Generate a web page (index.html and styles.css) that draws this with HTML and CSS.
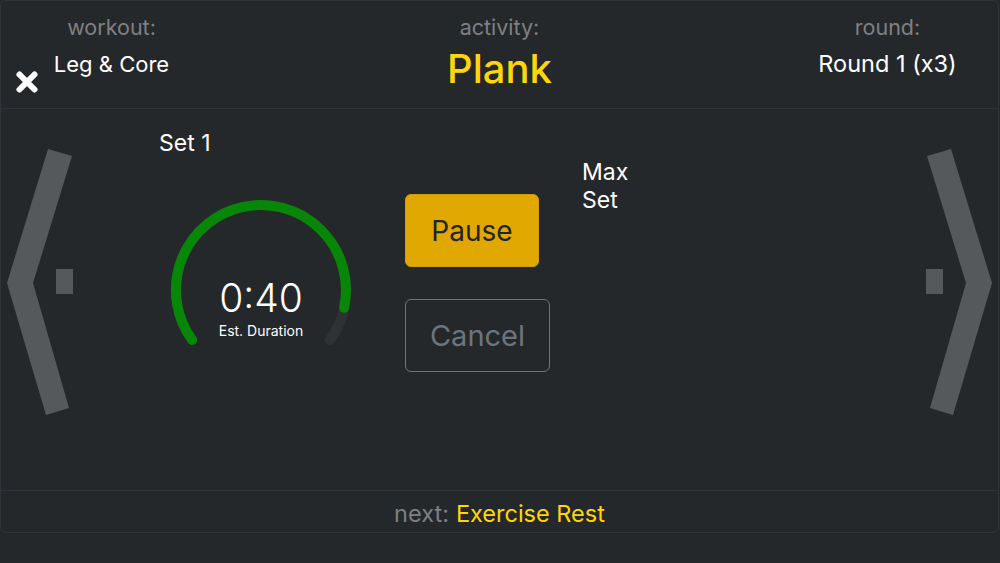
FILE: index.html
```html
<!DOCTYPE html>
<html>
<head>
<meta charset="utf-8">
<link rel="stylesheet" href="styles.css">
</head>
<body>
<div class="app">
  <header class="header">
    <button class="close" aria-label="close">
      <svg width="24" height="24" viewBox="0 0 24 24"><path d="M4.5 4.5 L19.5 19.5 M19.5 4.5 L4.5 19.5" stroke="#fff" stroke-width="6" stroke-linecap="round"/></svg>
    </button>
    <div class="col col-workout">
      <div class="label">workout:</div>
      <div class="value">Leg &amp; Core</div>
    </div>
    <div class="col col-activity">
      <div class="label">activity:</div>
      <div class="activity">Plank</div>
    </div>
    <div class="col col-round">
      <div class="label">round:</div>
      <div class="value">Round 1 (x3)</div>
    </div>
  </header>
  <main class="main">
    <div class="nav nav-left">
      <svg width="72" height="266" viewBox="0 0 72 266"><polygon points="47,0 71,7 32,134 68,259 45,266 6,134" fill="#55595c"/><rect x="55" y="120" width="17" height="25" fill="#55595c"/></svg>
    </div>
    <div class="timer">
      <div class="set">Set 1</div>
      <div class="gauge">
        <svg width="200" height="160" viewBox="0 0 200 160">
          <path d="M31.2 145 A85 85 0 1 1 168.8 145" fill="none" stroke="#2f3235" stroke-width="10" stroke-linecap="round"/>
          <path d="M31.2 145 A85 85 0 1 1 183.1 112.7" fill="none" stroke="#078607" stroke-width="10" stroke-linecap="round"/>
        </svg>
        <div class="time">0:40</div>
        <div class="est">Est. Duration</div>
      </div>
    </div>
    <div class="buttons">
      <button class="btn btn-pause">Pause</button>
      <button class="btn btn-cancel">Cancel</button>
    </div>
    <div class="maxset">Max<br>Set</div>
    <div class="nav nav-right">
      <svg width="72" height="266" viewBox="0 0 72 266"><polygon points="25,0 1,7 40,134 4,259 27,266 66,134" fill="#55595c"/><rect x="0" y="120" width="17" height="25" fill="#55595c"/></svg>
    </div>
  </main>
  <footer class="footer">
    <span class="next-label">next:</span><span class="next-value">Exercise Rest</span>
  </footer>
</div>
</body>
</html>
```
FILE: styles.css
```css
html, body {
  margin: 0;
  padding: 0;
  background: #25282b;
}
body {
  width: 1000px;
  height: 563px;
  overflow: hidden;
  font-family: "Inter", "Roboto", "Liberation Sans", sans-serif;
  color: #fff;
}
.app {
  width: 999px;
  height: 533px;
  box-sizing: border-box;
  border: 1px solid #303337;
  border-radius: 6px;
  display: flex;
  flex-direction: column;
}
.header {
  position: relative;
  height: 108px;
  box-sizing: border-box;
  border-bottom: 1px solid #303337;
  display: grid;
  grid-template-columns: 221px 1fr 221px;
}
.close {
  position: absolute;
  left: 14px;
  top: 69px;
  width: 24px;
  height: 24px;
  padding: 0;
  border: 0;
  background: none;
  display: block;
}
.close svg { display: block; }
.col {
  display: flex;
  flex-direction: column;
  align-items: center;
  padding-top: 14px;
}
.label {
  font-size: 21.5px;
  line-height: 24px;
  color: #7f8081;
}
.value {
  margin-top: 12px;
  font-size: 22px;
  line-height: 26px;
  color: #fff;
}
.col-round .value { font-size: 23.5px; }
.activity {
  margin-top: 6px;
  font-size: 40px;
  line-height: 48px;
  font-weight: 500;
  color: #ffd60a;
}
.main {
  height: 381px;
  display: flex;
  align-items: flex-start;
}
.nav { width: 72px; padding-top: 40px; }
.nav svg { display: block; }
.nav-right { margin-left: auto; }
.timer {
  margin-left: 86px;
  padding-top: 21px;
  display: flex;
  flex-direction: column;
}
.set {
  font-size: 23px;
  line-height: 26px;
}
.gauge {
  position: relative;
  margin-top: 39px;
  margin-left: 2px;
  width: 200px;
  height: 160px;
}
.gauge svg { display: block; }
.time {
  position: absolute;
  left: 0;
  right: 0;
  top: 79px;
  text-align: center;
  font-size: 39px;
  line-height: 48px;
  font-weight: 300;
}
.est {
  position: absolute;
  left: 0;
  right: 0;
  top: 127px;
  text-align: center;
  font-size: 14px;
  line-height: 17px;
}
.buttons {
  margin-left: 44px;
  padding-top: 85px;
  display: flex;
  flex-direction: column;
  align-items: flex-start;
  gap: 32px;
}
.btn {
  height: 73px;
  box-sizing: border-box;
  border-radius: 6px;
  font-family: inherit;
  font-size: 28px;
  padding: 0;
}
.btn-pause {
  width: 134px;
  background: #e0a800;
  border: 1px solid #d39e00;
  color: #212529;
}
.btn-cancel {
  width: 145px;
  background: transparent;
  border: 1.5px solid #6c757d;
  color: #6c757d;
  font-size: 29px;
}
.maxset {
  margin-left: 32px;
  padding-top: 49px;
  font-size: 23px;
  line-height: 28px;
}
.footer {
  flex: 1;
  border-top: 1px solid #303337;
  display: flex;
  align-items: center;
  justify-content: center;
  gap: 7px;
  padding-top: 3px;
  font-size: 23.5px;
}
.next-label { color: #7f8081; }
.next-value { color: #ffd60a; }
```
